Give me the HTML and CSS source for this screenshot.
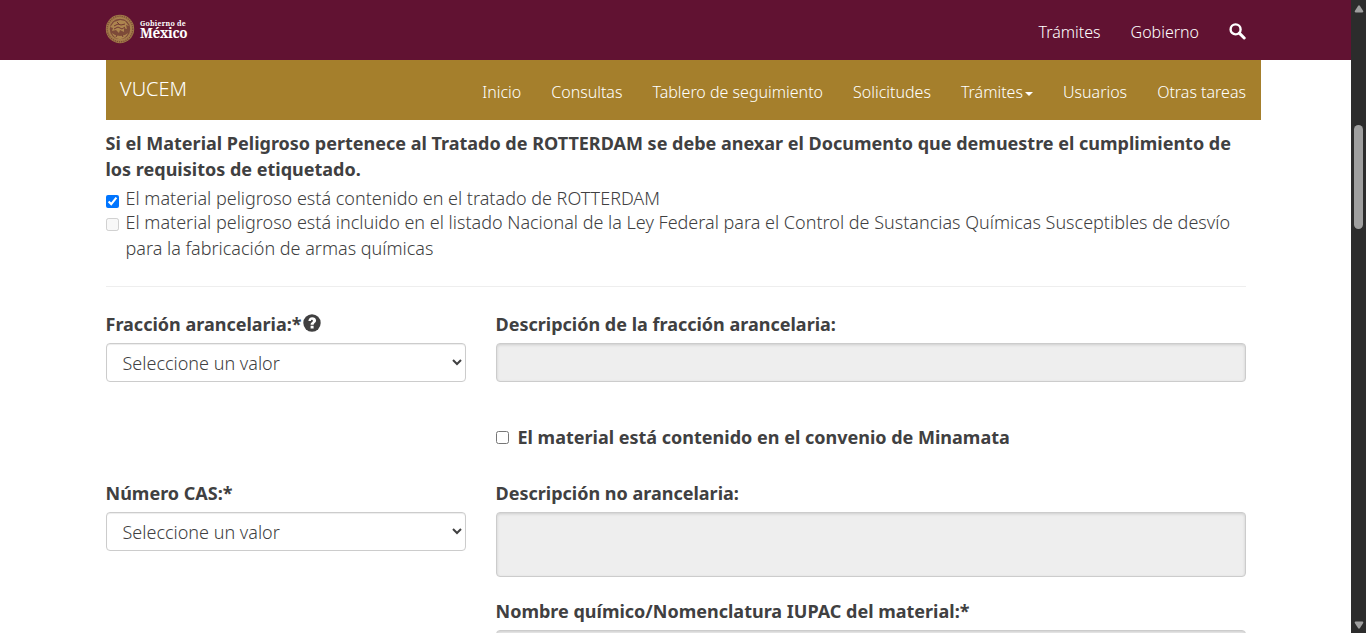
FILE: index.html
```html
<!DOCTYPE html>
<html lang="es">
<head>
<meta charset="utf-8">
<title>VUCEM</title>
<link rel="stylesheet" href="styles.css">
</head>
<body>
<div class="viewport">
  <div class="page">
    <header class="topbar">
      <a class="brand">
        <svg class="seal" viewBox="0 0 30 30" width="30" height="30">
          <circle cx="15" cy="15" r="14.2" fill="#a27b48"/>
          <circle cx="15" cy="15" r="12.8" fill="none" stroke="#7d4a38" stroke-width="1.3" stroke-dasharray="1.2 1"/>
          <circle cx="15" cy="15" r="10.8" fill="#7d4a38" stroke="#b28b55" stroke-width=".8"/>
          <path d="M6 12l3-4 6-2 5 1 4 5-3-1 1 4-3-1 0 4-4-2-1 3-3-3-4 1 1-3-3-1z" fill="#ad854f"/>
          <path d="M7 19c2 5 6 6 8 6s6-1 8-6l-3 2-5 1-5-1z" fill="#ad854f"/>
          <path d="M9 12l4-2 3 1 4-1M9 15l4-2 4 2 3-2M12 8l2 2M11 23l1-2M18 23l-1-2" fill="none" stroke="#6b3030" stroke-width=".9"/>
        </svg>
        <span class="brand-text"><span class="brand-small">Gobierno de</span><span class="brand-big">México</span></span>
      </a>
      <nav class="toplinks">
        <a>Trámites</a>
        <a>Gobierno</a>
        <svg class="search" viewBox="0 0 17 17" width="17" height="17"><circle cx="6.6" cy="6.4" r="5" fill="none" stroke="#fff" stroke-width="2.4"/><path d="M10.3 10.1l4.9 4.9" stroke="#fff" stroke-width="3" stroke-linecap="round"/></svg>
      </nav>
    </header>
    <div class="subnav">
      <a class="title">VUCEM</a>
      <nav class="menu">
        <a>Inicio</a><a>Consultas</a><a>Tablero de seguimiento</a><a>Solicitudes</a><a class="drop">Trámites<span class="caret"></span></a><a>Usuarios</a><a>Otras tareas</a>
      </nav>
    </div>
    <main class="content">
      <p class="notice">Si el Material Peligroso pertenece al Tratado de ROTTERDAM se debe anexar el Documento que demuestre el cumplimiento de<br>los requisitos de etiquetado.</p>
      <label class="check first"><input type="checkbox" checked><span>El material peligroso está contenido en el tratado de ROTTERDAM</span></label>
      <label class="check second"><input type="checkbox" disabled><span>El material peligroso está incluido en el listado Nacional de la Ley Federal para el Control de Sustancias Químicas Susceptibles de desvío<br>para la fabricación de armas químicas</span></label>
      <hr class="rule">
      <div class="row row-fraction">
        <div class="field">
          <div class="label">Fracción arancelaria:*<svg class="help" viewBox="0 0 18 18" width="18" height="18"><circle cx="9" cy="9" r="8.7" fill="#404041"/><path d="M5.4 7.1C5.5 4.5 7.1 3.2 9.2 3.2c2.2 0 3.9 1.2 3.9 3.3 0 2.3-2.5 2.6-2.5 4.3H7.6c0-2.5 2.3-2.7 2.3-4.1 0-.6-.4-.9-.9-.9-.7 0-1 .4-1.1 1.3zM7.6 11.7h3v2.8h-3z" fill="#fff"/></svg></div>
          <select class="control"><option>Seleccione un valor</option></select>
        </div>
        <div class="field">
          <div class="label">Descripción de la fracción arancelaria:</div>
          <input class="control" type="text" disabled>
        </div>
      </div>
      <label class="minamata"><input type="checkbox"><span class="label">El material está contenido en el convenio de Minamata</span></label>
      <div class="row">
        <div class="field">
          <div class="label">Número CAS:*</div>
          <select class="control"><option>Seleccione un valor</option></select>
        </div>
        <div class="field">
          <div class="label">Descripción no arancelaria:</div>
          <textarea class="control area" disabled></textarea>
          <div class="label iupac">Nombre químico/Nomenclatura IUPAC del material:*</div>
          <textarea class="control area" disabled></textarea>
        </div>
      </div>
    </main>
  </div>
  <div class="scrollbar">
    <svg width="10" height="8" viewBox="0 0 10 8"><path d="M4 1Q5-.4 6 1L9.2 6Q9.6 7.4 8.4 7.4H1.6Q.4 7.4.8 6z" fill="#9f9f9f"/></svg>
    <div class="thumb"></div>
    <svg class="down" width="10" height="8" viewBox="0 0 10 8"><path d="M4 7Q5 8.4 6 7L9.2 2Q9.6.6 8.4.6H1.6Q.4.6.8 2z" fill="#9f9f9f"/></svg>
  </div>
</div>
</body>
</html>
```
FILE: styles.css
```css
* { box-sizing: border-box; }
body { margin: 0; overflow: hidden; background: #fff; color: #404041; font: 300 18px/25.7px "Noto Sans", sans-serif; }
.viewport { display: flex; width: 1366px; height: 633px; overflow: hidden; }
.page { width: 1351px; height: 633px; overflow: hidden; }
.topbar { height: 60px; background: #611232; padding: 0 105px 0 105px; display: flex; justify-content: space-between; color: #fff; }
.brand { display: flex; align-items: flex-start; padding-top: 14px; gap: 5px; }
.seal { display: block; }
.brand-text { display: flex; flex-direction: column; padding-top: 5px; font-family: "Noto Serif", "Liberation Serif", serif; font-weight: 700; }
.brand-small { font-size: 7px; line-height: 9px; letter-spacing: .2px; }
.brand-big { font-size: 13.5px; line-height: 10px; letter-spacing: -.4px; }
.toplinks { display: flex; align-items: flex-start; gap: 30px; padding-top: 20px; font-size: 16px; line-height: 24px; }
.search { display: block; margin-top: 3px; }
.subnav { margin-left: 106px; width: 1155px; height: 60px; background: #a57f2c; color: #fff; display: flex; justify-content: space-between; padding: 0 15px 0 14px; }
.title { font-size: 20px; line-height: 28px; padding-top: 15px; }
.menu { display: flex; align-items: flex-start; gap: 30px; padding-top: 20px; font-size: 16px; line-height: 24px; }
.drop { display: flex; align-items: center; }
.caret { margin: 4px 0 0 2px; border: 4px solid transparent; border-top-color: #fff; border-bottom: 0; }
.content { width: 1141px; margin-left: 105.5px; padding-top: 11px; }
.notice { margin: 0; font-weight: 700; white-space: nowrap; }
.check { display: flex; gap: 7px; white-space: nowrap; }
.check input, .minamata input { flex: none; width: 13px; height: 13px; margin: 0; }
.check.first { height: 24px; margin-top: 4px; }
.check input { margin-top: 8px; }
.check.first input { margin-top: 9px; }
.rule { border: 0; border-top: 1px solid #eee; margin: 24px 0 25px; width: 1140px; }
.row { display: grid; grid-template-columns: 360px 750px; gap: 30px; }
.field { display: flex; flex-direction: column; }
.label { font-weight: 700; height: 26px; white-space: nowrap; }
.help { display: inline-block; vertical-align: -1px; margin-left: 1px; }
.control { display: block; width: 100%; height: 39px; margin: 5px 0 0; border: 1px solid #ccc; border-radius: 4px; background: #fff; box-shadow: inset 0 1px 1px rgba(0,0,0,.075); color: #404041; font: inherit; padding: 0 12px; outline: 0; }
select.control { padding: 1px 12px 0; }
.control:disabled { background: #eee; box-shadow: inset 0 1px 3px rgba(0,0,0,.14); }
.area { height: 65px; resize: none; }
.iupac { margin-top: 22px; }
.minamata { display: flex; align-items: center; gap: 9px; margin: 43px 0 30px 390px; height: 26px; }
.scrollbar { width: 15px; height: 633px; background: #2c2c2c; display: flex; flex-direction: column; align-items: center; padding: 5px 0 4px; }
.thumb { width: 9px; height: 104px; border-radius: 5px; background: #9f9f9f; margin-top: 112px; }
.down { margin-top: auto; }
```
